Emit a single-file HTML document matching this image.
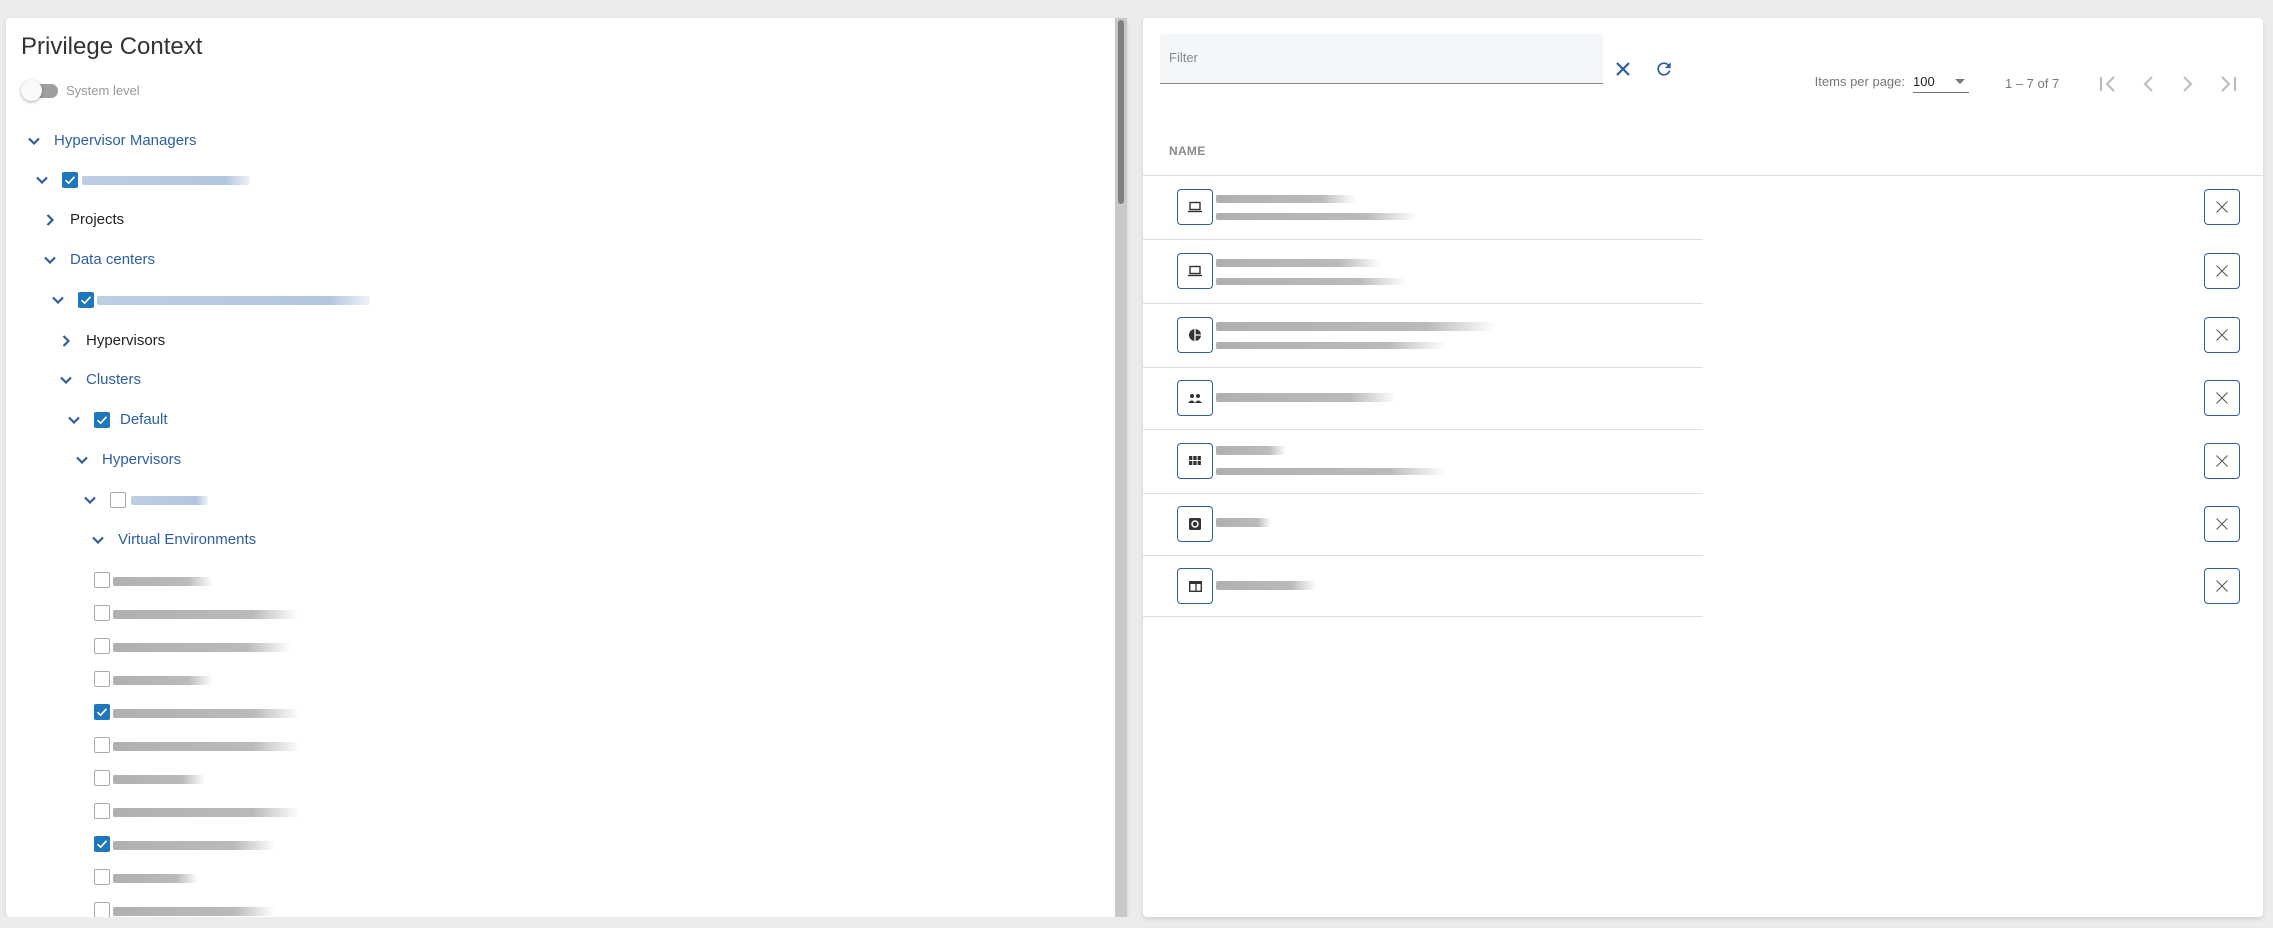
<!DOCTYPE html>
<html><head><meta charset="utf-8"><style>
*{box-sizing:border-box;margin:0;padding:0}
body{width:2273px;height:928px;background:#ececec;font-family:"Liberation Sans",sans-serif;position:relative;overflow:hidden}
.abs{position:absolute}
.panel{position:absolute;background:#fff;border-radius:4px;box-shadow:0 2px 4px rgba(0,0,0,.12)}
.t{position:absolute;font-size:15px;line-height:20px;white-space:nowrap}
.blue{color:#2d5fa0}
.dark{color:#222}
.chev{position:absolute;width:14px;height:14px}
.cb{position:absolute;width:16px;height:16px;border-radius:2px}
.cb.on{background:#1f77bb}
.cb.off{border:1.5px solid #aaa;background:#fff}
.bl{position:absolute;height:9px;border-radius:2px}
.bg{background:linear-gradient(90deg,#b0b0b0 0%,#bababa 75%,rgba(210,210,210,0))}
.bb{background:linear-gradient(90deg,#bccee3 0%,#b2c6de 85%,rgba(200,215,235,0.3))}
.row{position:absolute;left:1143px;width:560px;height:1px;background:#dedede}
.ib{position:absolute;left:1177px;width:36px;height:36px;border:1.5px solid #2f5f9e;border-radius:4px;display:flex;align-items:center;justify-content:center}
.xb{position:absolute;left:2204px;width:36px;height:36px;border:1.5px solid #2f5f9e;border-radius:4px;display:flex;align-items:center;justify-content:center}
</style></head><body>
<div class="panel" style="left:6px;top:18px;width:1121px;height:899px"></div>
<div class="abs" style="left:1115px;top:18px;width:12px;height:899px;background:#c8c8c8"></div>
<div class="abs" style="left:1118px;top:20px;width:6px;height:184px;background:#7d7f80;border-radius:3px"></div>
<div class="t" style="left:21px;top:32px;font-size:24px;line-height:30px;color:#333">Privilege Context</div>
<div class="abs" style="left:24px;top:84px;width:34px;height:14px;border-radius:7px;background:#9e9e9e"></div>
<div class="abs" style="left:21px;top:80px;width:21px;height:21px;border-radius:50%;background:#fafafa;box-shadow:0 1px 3px rgba(0,0,0,.35)"></div>
<div class="t" style="left:66px;top:81px;font-size:13px;color:#999">System level</div>

<svg width="0" height="0" style="position:absolute"><defs>
<symbol id="cd" viewBox="0 0 14 14"><path d="M2 4.5 L7 9.5 L12 4.5" fill="none" stroke="#2d5fa0" stroke-width="2.2"/></symbol>
<symbol id="cr" viewBox="0 0 14 14"><path d="M4.5 2 L9.5 7 L4.5 12" fill="none" stroke="#2d5fa0" stroke-width="2.2"/></symbol>
<symbol id="ck" viewBox="0 0 16 16"><path d="M3.5 8.2 L6.6 11.2 L12.5 4.8" fill="none" stroke="#fff" stroke-width="1.6"/></symbol>
</defs></svg>

<svg class="chev" style="left:27px;top:134px"><use href="#cd"/></svg>
<div class="t blue" style="left:54px;top:131px">Hypervisor Managers</div>

<svg class="chev" style="left:35px;top:173px"><use href="#cd"/></svg>
<div class="cb on" style="left:62px;top:172px"><svg width="16" height="16"><use href="#ck"/></svg></div>
<div class="bl bb" style="left:82px;top:176px;width:168px"></div>

<svg class="chev" style="left:43px;top:213px"><use href="#cr"/></svg>
<div class="t dark" style="left:70px;top:210px">Projects</div>

<svg class="chev" style="left:43px;top:253px"><use href="#cd"/></svg>
<div class="t blue" style="left:70px;top:250px">Data centers</div>

<svg class="chev" style="left:51px;top:293px"><use href="#cd"/></svg>
<div class="cb on" style="left:78px;top:292px"><svg width="16" height="16"><use href="#ck"/></svg></div>
<div class="bl bb" style="left:97px;top:296px;width:273px"></div>

<svg class="chev" style="left:59px;top:334px"><use href="#cr"/></svg>
<div class="t dark" style="left:86px;top:331px">Hypervisors</div>

<svg class="chev" style="left:59px;top:373px"><use href="#cd"/></svg>
<div class="t blue" style="left:86px;top:370px">Clusters</div>

<svg class="chev" style="left:67px;top:413px"><use href="#cd"/></svg>
<div class="cb on" style="left:94px;top:412px"><svg width="16" height="16"><use href="#ck"/></svg></div>
<div class="t blue" style="left:120px;top:410px">Default</div>

<svg class="chev" style="left:75px;top:453px"><use href="#cd"/></svg>
<div class="t blue" style="left:102px;top:450px">Hypervisors</div>

<svg class="chev" style="left:83px;top:493px"><use href="#cd"/></svg>
<div class="cb off" style="left:110px;top:492px"></div>
<div class="bl bb" style="left:131px;top:496px;width:77px"></div>

<svg class="chev" style="left:91px;top:533px"><use href="#cd"/></svg>
<div class="t blue" style="left:118px;top:530px">Virtual Environments</div>

<div class="cb off" style="left:94px;top:572px"></div><div class="bl bg" style="left:113px;top:577px;width:100px"></div>
<div class="cb off" style="left:94px;top:605px"></div><div class="bl bg" style="left:113px;top:610px;width:185px"></div>
<div class="cb off" style="left:94px;top:638px"></div><div class="bl bg" style="left:113px;top:643px;width:178px"></div>
<div class="cb off" style="left:94px;top:671px"></div><div class="bl bg" style="left:113px;top:676px;width:100px"></div>
<div class="cb on" style="left:94px;top:704px"><svg width="16" height="16"><use href="#ck"/></svg></div><div class="bl bg" style="left:113px;top:709px;width:187px"></div>
<div class="cb off" style="left:94px;top:737px"></div><div class="bl bg" style="left:113px;top:742px;width:187px"></div>
<div class="cb off" style="left:94px;top:770px"></div><div class="bl bg" style="left:113px;top:775px;width:92px"></div>
<div class="cb off" style="left:94px;top:803px"></div><div class="bl bg" style="left:113px;top:808px;width:187px"></div>
<div class="cb on" style="left:94px;top:836px"><svg width="16" height="16"><use href="#ck"/></svg></div><div class="bl bg" style="left:113px;top:841px;width:162px"></div>
<div class="cb off" style="left:94px;top:869px"></div><div class="bl bg" style="left:113px;top:874px;width:85px"></div>
<div class="cb off" style="left:94px;top:902px"></div><div class="bl bg" style="left:113px;top:907px;width:162px"></div>
<div class="abs" style="left:0;top:917px;width:1140px;height:11px;background:#ececec"></div>

<div class="panel" style="left:1143px;top:18px;width:1120px;height:899px"></div>
<div class="abs" style="left:1160px;top:34px;width:443px;height:50px;background:#f4f7fa;border-radius:4px 4px 0 0;border-bottom:1.5px solid #888"></div>
<div class="t" style="left:1169px;top:48px;font-size:13px;color:#888">Filter</div>
<svg class="abs" style="left:1614px;top:60px" width="18" height="18"><path d="M3 3L15 15M15 3L3 15" stroke="#2d5fa0" stroke-width="2.2"/></svg>
<svg class="abs" style="left:1654px;top:59px" width="20" height="20" viewBox="0 0 24 24"><path d="M17.65 6.35A7.96 7.96 0 0 0 12 4a8 8 0 1 0 7.73 10h-2.08A6 6 0 1 1 12 6c1.66 0 3.14.69 4.22 1.78L13 11h7V4l-2.35 2.35z" fill="#2d5fa0"/></svg>

<div class="t" style="left:1806px;width:99px;text-align:right;top:72px;font-size:13px;color:#777">Items per page:</div>
<div class="t" style="left:1913px;top:72px;font-size:13px;color:#222">100</div>
<div class="abs" style="left:1913px;top:92px;width:56px;height:1px;background:#777"></div>
<svg class="abs" style="left:1954px;top:78px" width="12" height="8"><path d="M1 1H11L6 6Z" fill="#777"/></svg>
<div class="t" style="left:2005px;top:74px;font-size:13px;color:#777">1 – 7 of 7</div>
<svg class="abs" style="left:2098px;top:74px" width="140" height="20" fill="none" stroke="#bbb" stroke-width="2">
<path d="M3 3V17M16 3L9 10L16 17"/><path d="M54 3L47 10L54 17"/><path d="M86 3L93 10L86 17"/><path d="M124 3L131 10L124 17M137 3V17"/></svg>

<div class="t" style="left:1169px;top:141px;font-size:12px;font-weight:bold;color:#8a8a8a;letter-spacing:.3px">NAME</div>
<div class="abs" style="left:1143px;top:175px;width:1120px;height:1px;background:#dedede"></div>
<div class="row" style="top:239px"></div><div class="row" style="top:303px"></div><div class="row" style="top:367px"></div><div class="row" style="top:429px"></div><div class="row" style="top:493px"></div><div class="row" style="top:555px"></div><div class="row" style="top:616px"></div>

<div class="ib" style="top:189px"><svg width="14" height="12"><rect x="2" y="1.5" width="10" height="7" fill="none" stroke="#333" stroke-width="1.4"/><path d="M0 10.5H14" stroke="#333" stroke-width="1.4"/></svg></div>
<div class="ib" style="top:253px"><svg width="14" height="12"><rect x="2" y="1.5" width="10" height="7" fill="none" stroke="#333" stroke-width="1.4"/><path d="M0 10.5H14" stroke="#333" stroke-width="1.4"/></svg></div>
<div class="ib" style="top:317px"><svg width="14" height="14"><circle cx="7" cy="7" r="6" fill="#333"/><path d="M7 1V13M7 7H13" stroke="#fff" stroke-width="1.3"/></svg></div>
<div class="ib" style="top:380px"><svg width="14" height="12"><circle cx="4" cy="4" r="2" fill="#333"/><circle cx="10" cy="4" r="2" fill="#333"/><path d="M0 11Q4 6 7 11ZM7 11Q10 6 14 11Z" fill="#333"/></svg></div>
<div class="ib" style="top:443px"><svg width="12" height="10" fill="#333"><rect x="0" y="0" width="3.3" height="4"/><rect x="4.3" y="0" width="3.3" height="4"/><rect x="8.6" y="0" width="3.3" height="4"/><rect x="0" y="5" width="3.3" height="4"/><rect x="4.3" y="5" width="3.3" height="4"/><rect x="8.6" y="5" width="3.3" height="4"/></svg></div>
<div class="ib" style="top:506px"><svg width="12" height="12"><rect x="0" y="0" width="12" height="12" rx="1.5" fill="#333"/><circle cx="6" cy="6" r="3" fill="none" stroke="#fff" stroke-width="1.5"/></svg></div>
<div class="ib" style="top:568px"><svg width="13" height="11"><rect x="0.7" y="0.7" width="11.6" height="9.6" fill="none" stroke="#333" stroke-width="1.4"/><rect x="0" y="0" width="13" height="3" fill="#333"/><path d="M7 3V10" stroke="#333" stroke-width="1.3"/></svg></div>

<div class="bl bg" style="left:1216px;top:195px;width:140px;height:8px"></div>
<div class="bl bg" style="left:1216px;top:213px;width:200px;height:7px"></div>
<div class="bl bg" style="left:1216px;top:259px;width:165px;height:8px"></div>
<div class="bl bg" style="left:1216px;top:278px;width:190px;height:7px"></div>
<div class="bl bg" style="left:1216px;top:322px;width:280px;height:9px"></div>
<div class="bl bg" style="left:1216px;top:342px;width:230px;height:7px"></div>
<div class="bl bg" style="left:1216px;top:393px;width:180px;height:9px"></div>
<div class="bl bg" style="left:1216px;top:446px;width:70px;height:9px"></div>
<div class="bl bg" style="left:1216px;top:468px;width:230px;height:7px"></div>
<div class="bl bg" style="left:1216px;top:518px;width:55px;height:9px"></div>
<div class="bl bg" style="left:1216px;top:581px;width:100px;height:9px"></div>

<div class="xb" style="top:189px"><svg width="14" height="14"><path d="M1.5 1.5L12.5 12.5M12.5 1.5L1.5 12.5" stroke="#555" stroke-width="1"/></svg></div>
<div class="xb" style="top:253px"><svg width="14" height="14"><path d="M1.5 1.5L12.5 12.5M12.5 1.5L1.5 12.5" stroke="#555" stroke-width="1"/></svg></div>
<div class="xb" style="top:317px"><svg width="14" height="14"><path d="M1.5 1.5L12.5 12.5M12.5 1.5L1.5 12.5" stroke="#555" stroke-width="1"/></svg></div>
<div class="xb" style="top:380px"><svg width="14" height="14"><path d="M1.5 1.5L12.5 12.5M12.5 1.5L1.5 12.5" stroke="#555" stroke-width="1"/></svg></div>
<div class="xb" style="top:443px"><svg width="14" height="14"><path d="M1.5 1.5L12.5 12.5M12.5 1.5L1.5 12.5" stroke="#555" stroke-width="1"/></svg></div>
<div class="xb" style="top:506px"><svg width="14" height="14"><path d="M1.5 1.5L12.5 12.5M12.5 1.5L1.5 12.5" stroke="#555" stroke-width="1"/></svg></div>
<div class="xb" style="top:568px"><svg width="14" height="14"><path d="M1.5 1.5L12.5 12.5M12.5 1.5L1.5 12.5" stroke="#555" stroke-width="1"/></svg></div>
</body></html>
